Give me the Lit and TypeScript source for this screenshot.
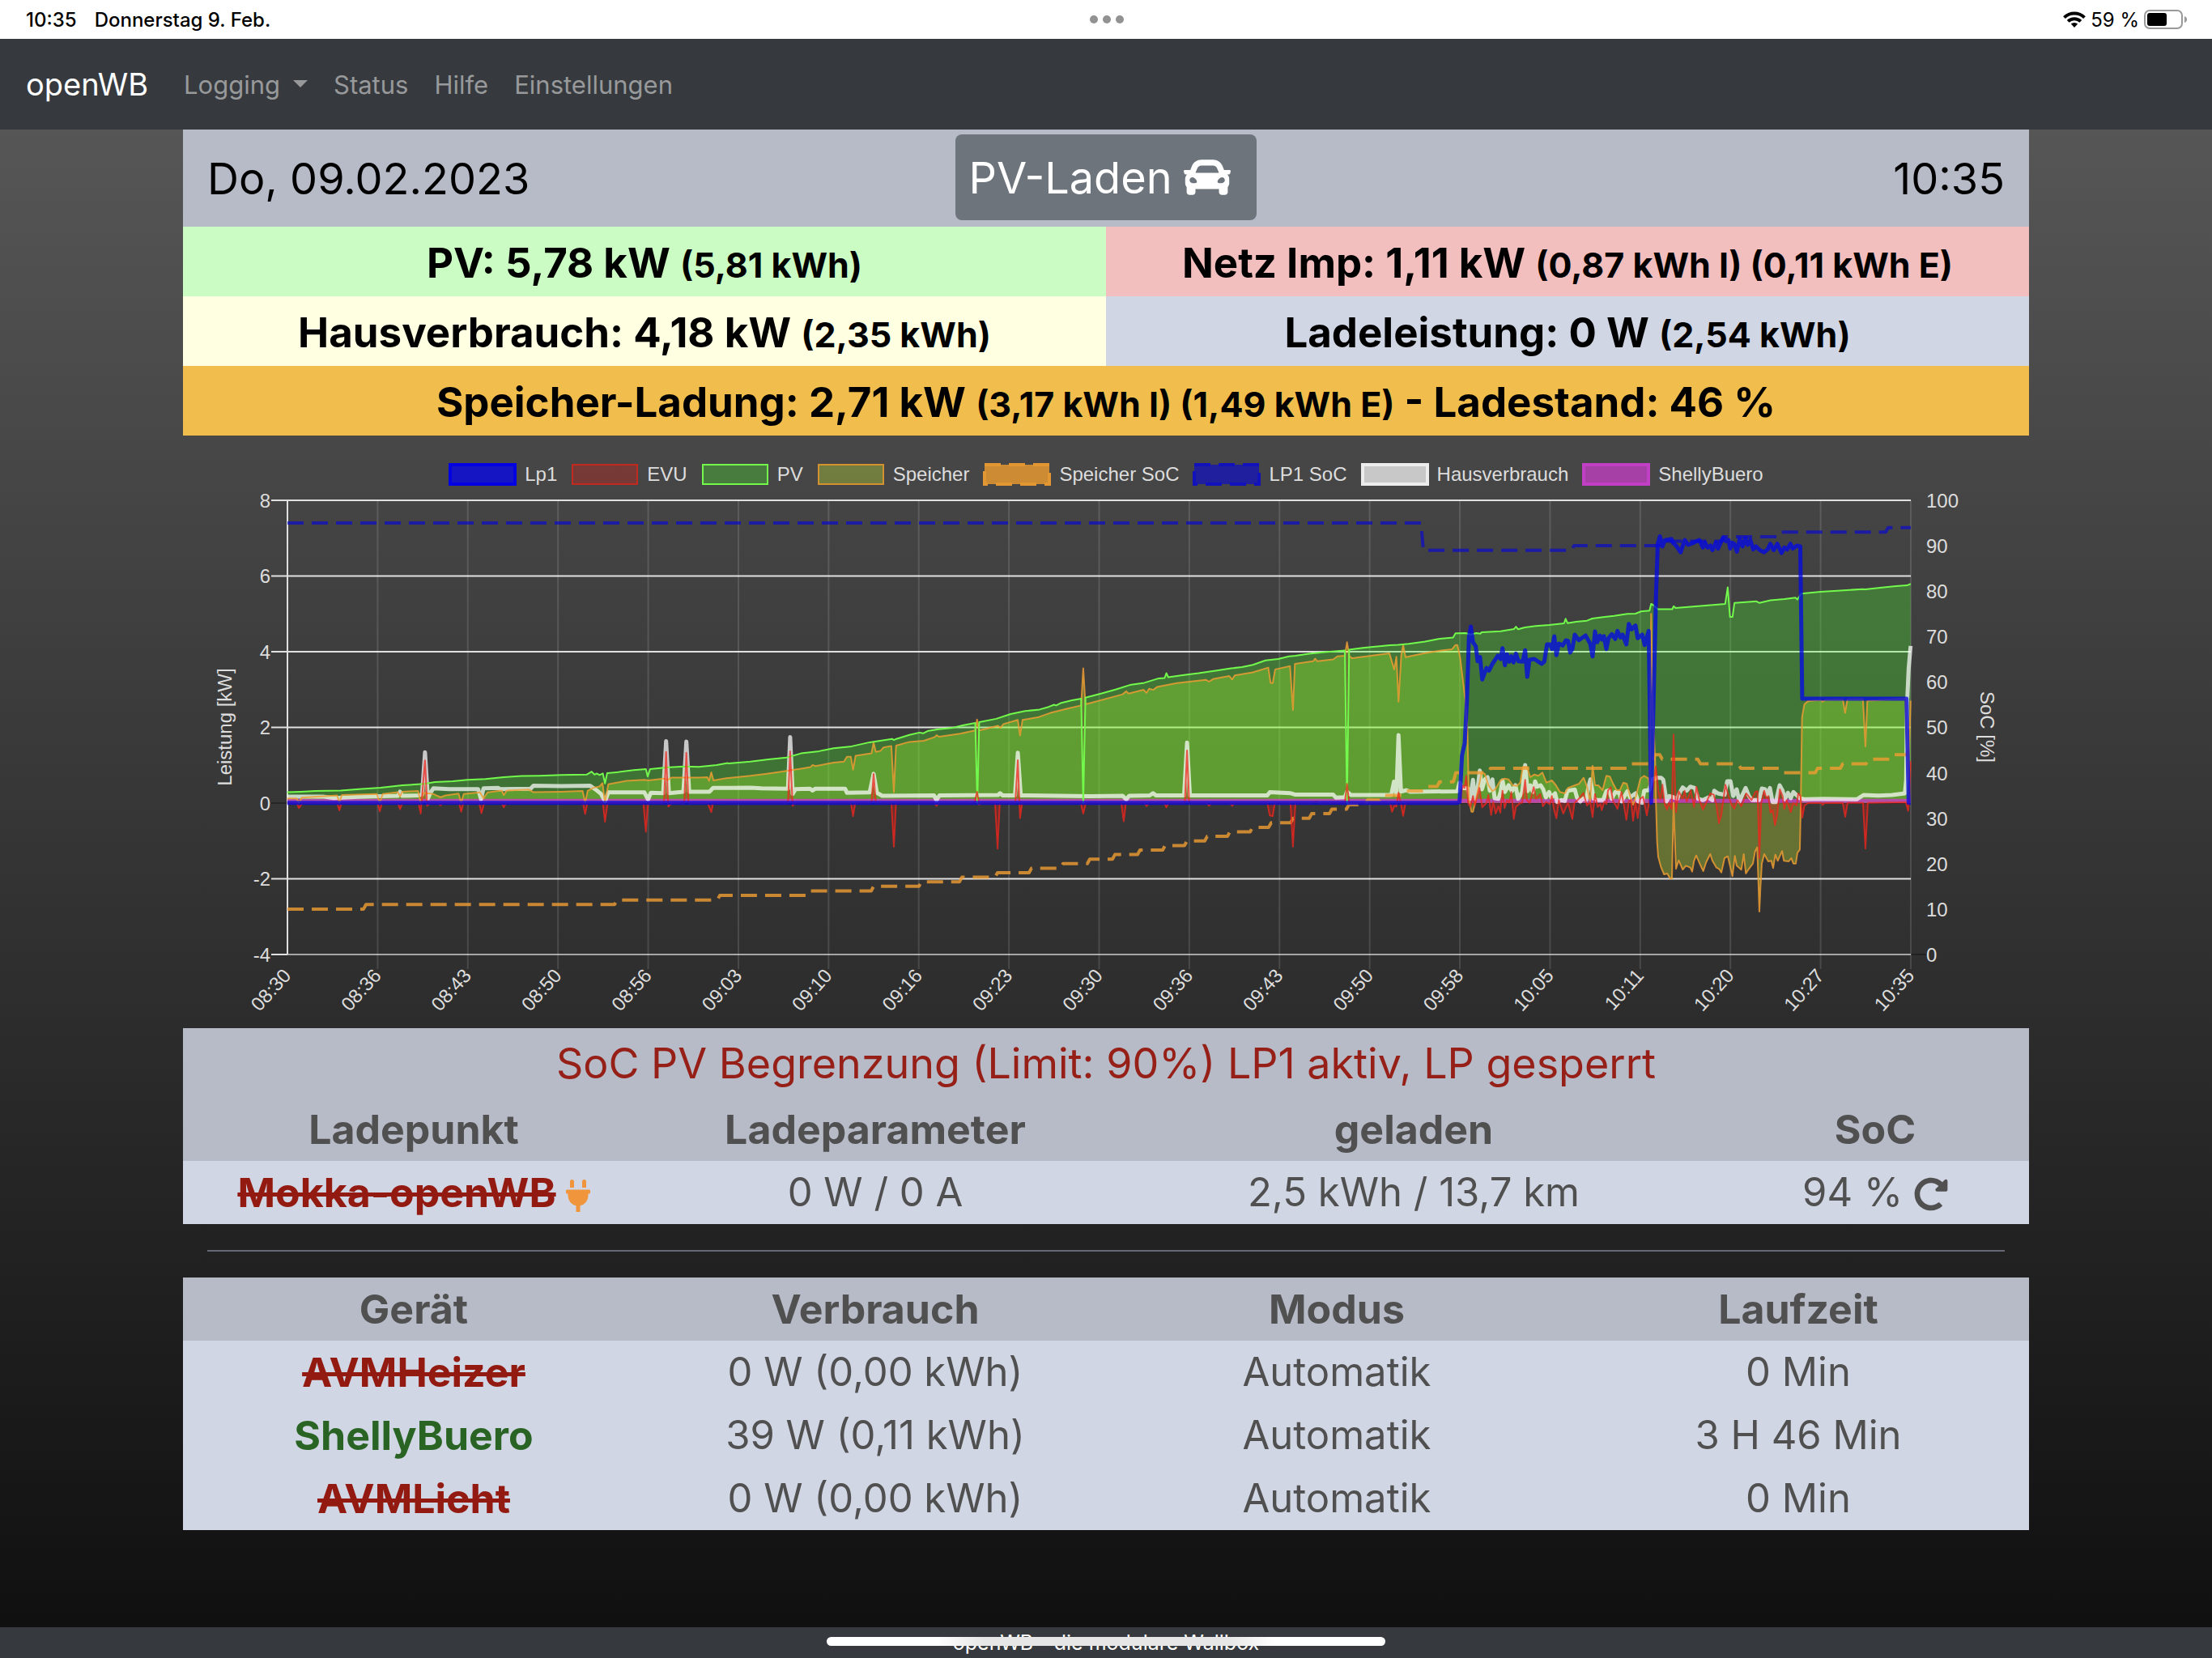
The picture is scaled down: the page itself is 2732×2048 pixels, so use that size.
import { LitElement, html, svg, css } from "lit";
import { customElement } from "lit/decorators.js";
import { classMap } from "lit/directives/class-map.js";

/* ---------- chart scales ---------- */

const LEFT = 355;
const RIGHT = 2360;
const TOP = 618;
const BOTTOM = 1179;
const TICKS = ["08:30", "08:36", "08:43", "08:50", "08:56", "09:03", "09:10", "09:16", "09:23", "09:30", "09:36", "09:43", "09:50", "09:58", "10:05", "10:11", "10:20", "10:27", "10:35"];

const yPower = (kw: number) => TOP + ((8 - kw) * (BOTTOM - TOP)) / 12;
const ySoc = (pct: number) => BOTTOM - (pct * (BOTTOM - TOP)) / 100;

type Raster = [number, number, number, number];
const R: Record<string, Raster> = {
  a: [220, 550, 2.24, 2.178],
  b: [900, 550, 2.24, 2.178],
  c: [1560, 550, 3, 2.178],
  d: [1980, 550, 2.904, 2.178],
  e: [1780, 740, 3, 3],
  f: [2020, 880, 3, 3],
};

const trace = (...blocks: [string, string][]): string =>
  blocks
    .map(([key, samples]) => {
      const [x0, y0, sx, sy] = R[key];
      return samples
        .trim()
        .split(/\s+/)
        .map((s) => {
          const [x, y] = s.split(",").map(Number);
          return `${(x0 + x / sx).toFixed(1)},${(y0 + y / sy).toFixed(1)}`;
        })
        .join(" ");
    })
    .join(" ");

const pv = trace(
  ["a", "302,933 340,932 380,930 450,929 500,925 560,921 620,915 680,911 710,906 760,904 800,900 850,898 900,893 950,890 1000,889 1060,887 1130,886 1144,878 1152,886 1158,883 1166,887 1175,883 1181,910 1187,882 1220,879 1260,874 1294,871 1299,891 1306,871 1350,867 1400,864 1440,865 1490,860 1520,855"],
  ["b", "0,856 60,851 110,845 160,840 200,829 250,823 290,815 340,810 390,799 452,790 457,793 464,790 500,779 528,773 538,775 550,769 580,764 620,760 650,753 682,747 688,962 693,745 740,736 780,723 820,715 860,711 885,704 900,698 906,700 920,693 950,686 975,682 981,962 987,679 1030,668 1070,657 1110,645 1150,639 1190,627 1206,626 1211,613 1216,624 1260,618 1300,613 1350,606 1390,600 1420,597 1450,591 1485,579 1520,575 1550,568"],
  ["c", "120,566 170,561 220,557 303,552 311,962 319,550 370,545 400,543 470,538 500,537 540,534 600,528 650,521 704,517"],
  ["e", "53,127 90,126 110,131 130,126 145,128 150,123 220,119 270,111 277,102 285,112 310,105 350,100 400,96 455,90 461,73 468,89 500,84 540,80 560,72 600,67 640,62 690,55 720,54 740,46 772,43 778,18"],
  ["d", "180,430 197,441 248,441 253,433 260,438 340,433 438,427 447,382 455,462 464,462 471,424 550,420 560,424 600,417 650,414 690,410 697,415 710,399 780,394 850,391 930,387 940,388 1000,383 1050,379 1090,377 1103,373"],
);

const battery = trace(
  ["a", "302,950 328,950 334,962 342,948 440,942 446,962 453,941 550,938 558,962 566,938 608,933 614,945 620,932 664,930 671,962 679,935 705,938 726,947 740,942 776,937 783,962 790,938 835,934 845,950 856,934 895,929 901,941 909,929 970,926 982,933 1060,932 1119,930 1126,962 1133,930 1150,921 1166,918 1174,909 1181,962 1190,912 1240,903 1290,900 1300,902 1345,897 1355,900 1365,894 1440,894 1464,893 1469,903 1475,880 1481,902 1520,895"],
  ["b", "0,895 60,889 110,883 160,876 200,870 226,866 232,860 240,863 290,854 319,851 327,838 338,838 344,873 351,835 395,829 401,800 407,825 420,822 428,813 450,809 457,933 463,808 500,798 540,795 570,785 575,780 582,784 640,776 682,767 687,738 693,767 745,755 752,760 760,750 800,739 806,781 813,739 855,732 890,720 940,708 975,700 981,600 987,697 1040,683 1090,670 1100,662 1106,668 1148,658 1156,666 1163,655 1175,658 1185,650 1240,640 1320,631 1329,636 1340,629 1385,621 1393,630 1400,619 1450,611 1493,598 1499,639 1505,640 1512,603 1553,594 1561,712"],
  ["c", "118,588 185,581 193,574 201,581 260,576 275,568 303,566 311,530 320,568 330,573 400,566 468,560 486,603 494,569 502,690 512,565 519,538 528,570 600,559 660,552 700,549"],
  ["e", "53,170 60,170 70,215 90,380 97,480 103,740 112,788 118,788 128,745 140,690 150,643 162,648 175,690 190,712 200,705 220,672 235,665 250,668 265,690 280,692 293,680 302,622 318,622 330,660 345,650 360,655 375,643 390,680 410,672 425,690 440,715 458,720 470,700 490,692 510,685 528,662 540,695 552,750 561,618 570,690 582,690 598,708 612,655 625,658 635,680 650,708 662,708 675,680 688,685 700,730 711,762 722,730 738,665 752,655 768,665 773,700 778,55 784,400 793,600"],
  ["f", "76,335 80,480 84,535 95,575 106,600 118,597 128,616 135,616 141,335 150,580 160,548 175,582 187,568 203,575 210,590 217,550 225,530 240,565 251,588 262,555 277,525 285,550 300,575 310,580 318,593 330,540 342,533 352,575 359,607 368,532 375,568 392,583 401,525 409,597 420,580 435,560 443,515 451,500 455,620 459,738 463,650 468,560 477,525 492,552 503,550 510,577 518,527 527,550 543,514 550,550 568,552 577,540 585,560 594,560 600,520 609,508 612,360 617,20"],
  ["d", "715,725 722,697 735,688 780,685 788,690 797,685 860,684 868,720 876,684 932,683 941,810 948,687 1000,685 1085,682 1094,900 1103,687"],
);

const grid = trace(
  ["a", "302,962 328,962 334,976 344,963 440,962 446,982 452,963 552,963 558,985 564,963 608,963 614,979 620,963 665,963 671,991 683,848 689,970 697,962 720,963 726,969 732,962 777,963 783,986 789,963 833,963 839,990 847,963 895,963 901,974 907,963 1120,963 1126,992 1132,963 1175,963 1181,1013 1188,963 1287,963 1294,1040 1300,963 1344,963 1350,825 1356,972 1366,963 1400,963 1406,827 1412,963 1465,963 1475,987 1480,963"],
  ["b", "0,962 164,962 170,823 177,970 185,962 338,962 344,998 350,962 395,962 401,884 407,962 450,962 457,1080 463,962 568,962 575,970 582,962 680,962 687,932 693,967 700,962 737,962 744,1085 750,962 793,962 800,847 806,1003 812,962 974,962 981,991 988,962 1086,962 1093,1012 1099,962 1150,962 1156,971 1163,962 1205,962 1211,974 1217,962 1262,962 1268,821 1274,962 1322,962 1329,970 1336,962 1387,962 1393,970 1400,962 1490,962 1497,996 1505,998 1511,962 1554,962 1561,1080 1568,962"],
  ["c", "185,962 194,958 203,962 303,962 311,911 319,962 470,962 478,986 487,970 494,972 502,935 511,965 519,997 528,962 713,962"],
  ["e", "68,750 80,690 86,700 93,655 100,755 108,770 118,730 125,765 142,700 152,772 168,755 175,725 185,800 193,752 202,795 212,768 219,792 227,710 235,775 244,745 252,755 260,715 269,815 277,770 293,755 300,755 311,670 318,745 328,755 343,697 352,740 367,722 377,768 388,752 403,760 410,730 418,780 427,812 436,745 452,795 470,755 486,815 494,755 510,740 527,718 540,765 552,752 561,808 570,722 580,770 590,760 595,782 605,750 612,760 618,710 628,697 637,750 647,765 653,778 668,715 678,770 686,818 695,750 703,745 711,822 720,755 728,812 737,740 748,732 762,802 770,755 785,700 795,620"],
  ["f", "85,290 92,322 100,268 108,340 117,360 124,335 134,358 141,82 150,370 160,292 175,320 182,290 190,330 205,288 217,350 226,275 238,330 250,360 262,335 277,300 290,305 299,340 309,410 318,380 333,268 345,310 357,345 366,357 378,325 392,348 410,300 430,325 443,295 452,292 459,540 466,335 477,290 485,318 492,310 500,372 508,362 517,418 525,380 535,285 545,310 551,358 560,325 575,370 585,335 597,345 603,300 611,310 618,390 626,345 640,336 690,336 694,343 700,336 768,335 777,387 786,335 843,335 852,505 861,335 1002,333 1010,365"],
  ["d", "1098,955 1103,850"],
);

const house = trace(
  ["a", "302,945 400,945 430,949 500,946 560,944 608,943 614,932 620,943 665,942 675,940 683,826 691,950 698,935 706,923 750,925 830,925 838,952 845,923 885,922 892,925 975,924 983,916 1060,917 1140,916 1155,926 1170,938 1181,958 1190,934 1290,934 1300,953 1308,935 1342,936 1350,796 1358,936 1398,932 1406,797 1414,932 1470,932 1480,922"],
  ["b", "0,922 60,921 90,923 164,924 170,785 177,938 185,925 225,924 232,929 240,924 322,924 327,935 390,934 401,884 410,935 425,943 568,942 575,955 583,942 745,941 751,936 758,942 792,942 800,827 808,942 1000,944 1090,943 1100,953 1108,943 1165,942 1174,936 1182,942 1260,942 1268,800 1276,942 1490,942 1497,933 1555,936"],
  ["c", "120,940 260,940 270,948 303,947 311,932 325,941 475,941 485,905 494,940 502,780 511,932 530,928 545,932 715,931"],
  ["e", "60,712 68,680 78,700 100,702 108,740 118,670 126,740 134,710 143,635 151,705 162,668 172,660 180,710 190,668 198,738 212,740 220,715 227,672 236,715 250,690 262,712 275,690 285,740 300,715 311,615 320,712 330,690 340,715 348,676 356,695 368,690 378,705 388,735 400,715 408,735 422,720 430,752 445,745 458,748 468,710 495,706 503,735 515,750 528,738 537,745 545,700 553,668 565,740 580,745 600,745 612,712 622,708 632,740 645,715 660,718 668,750 690,712 700,735 720,720 730,750 745,755 752,710 770,708 782,668"],
  ["f", "80,242 95,242 103,250 115,330 125,310 142,315 155,320 165,295 175,278 190,290 203,275 220,280 232,320 250,325 270,315 285,325 292,290 305,300 330,305 340,255 352,255 362,310 375,285 385,330 408,280 420,310 432,325 458,325 468,282 480,285 488,305 498,280 508,332 520,332 534,270 545,290 553,322 565,298 575,318 585,295 600,310 610,318 625,322 700,320 820,322 845,306 900,308 950,306 998,300"],
  ["d", "1087,900 1090,700 1096,600 1103,540"],
);

const lp1 = trace(
  ["a", "302,962"],
  ["c", "720,962"],
  ["e", "68,752 77,580 87,535 95,380 103,140 110,102 118,160 128,175 135,230 144,215 152,298 168,255 177,265 190,240 210,210 220,222 227,182 236,245 244,205 252,232 260,212 268,235 277,202 286,230 302,232 311,190 319,288 327,225 345,222 360,232 372,240 382,232 392,168 403,168 411,185 419,138 427,208 436,165 450,172 462,153 470,155 478,198 486,185 495,132 510,152 535,135 552,165 561,212 570,120 578,160 588,135 596,150 603,138 612,185 620,145 632,130 645,148 653,118 664,142 672,132 686,168 695,92 705,112 720,98 728,145 745,132 754,170 769,118 778,755"],
  ["d", "190,400 196,265 204,245 213,272 222,255 245,252 250,262 262,270 278,288 293,255 305,268 325,262 345,255 358,275 366,262 375,275 385,270 392,282 404,262 412,278 420,265 430,248 440,258 450,255 456,278 463,262 470,265 480,286 490,252 500,272 510,250 518,268 528,255 538,280 548,272 562,282 578,288 590,280 600,265 612,282 625,265 640,290 650,275 660,280 672,265 680,278 695,270 707,272 714,682 1088,682 1096,962 1103,962"],
);

/* State of charge is logged only when it changes: [x of change, new percent]. */
const stairs = (start: number, changes: [number, number][]): string => {
  let level = start;
  const points = [`${LEFT},${ySoc(level).toFixed(1)}`];
  for (const [x, next] of changes) {
    points.push(`${x - 1},${ySoc(level).toFixed(1)}`, `${x + 2},${ySoc(next).toFixed(1)}`);
    level = next;
  }
  points.push(`${RIGHT},${ySoc(level).toFixed(1)}`);
  return points.join(" ");
};

const lp1Soc = stairs(95, [[1756, 89], [1942, 90], [2052, 91], [2127, 92], [2198, 93], [2330, 94]]);
const batterySoc = stairs(10, [
  [450, 11], [760, 12], [887, 13], [998, 14], [1077, 15], [1136, 16], [1186, 17], [1230, 18], [1272, 19], [1311, 20],
  [1344, 21], [1375, 22], [1406, 23], [1437, 24], [1464, 25], [1489, 26], [1517, 27], [1545, 28], [1568, 29], [1595, 30],
  [1618, 31], [1643, 32], [1664, 33], [1687, 34], [1705, 35], [1733, 36], [1760, 37], [1776, 38], [1796, 40], [1839, 41],
  [2012, 42], [2042, 44], [2051, 43], [2098, 42], [2148, 41], [2198, 40], [2243, 41], [2274, 42], [2306, 43], [2337, 44], [2356, 46],
]);

const closed = (points: string) => `${LEFT},${yPower(0)} ${points} ${RIGHT},${yPower(0)}`;

/* ---------- chart ---------- */

const LEGEND = [
  { label: "Lp1", kind: "lp1", stroke: 4 },
  { label: "EVU", kind: "evu", stroke: 2 },
  { label: "PV", kind: "pv", stroke: 2 },
  { label: "Speicher", kind: "battery", stroke: 2 },
  { label: "Speicher SoC", kind: "battery-soc", stroke: 4 },
  { label: "LP1 SoC", kind: "lp1-soc", stroke: 4 },
  { label: "Hausverbrauch", kind: "house", stroke: 4 },
  { label: "ShellyBuero", kind: "shelly", stroke: 4 },
];

@customElement("power-chart")
export class PowerChart extends LitElement {
  static styles = css`
    :host { display: block; font-family: "Liberation Sans", Arial, sans-serif; font-size: 24px; color: #ddd; }
    .legend { display: flex; justify-content: center; gap: 17px; margin: 0; padding: 34px 0 6px; list-style: none; line-height: 28px; }
    .legend li { display: flex; gap: 10px; }
    .swatch { width: 84px; height: 28px; }
    .plot { display: block; width: 100%; height: auto; }
    .plot text { fill: #ddd; font-size: 24px; }
    .end { text-anchor: end; }
    .mid { text-anchor: middle; }
    .rule { stroke: #e0e0e0; stroke-width: 2; }
    .rule.low { stroke: #a6a6a6; }
    .rule.zero { stroke: rgba(0, 0, 0, 0.3); }
    .column { stroke: rgba(255, 255, 255, 0.13); stroke-width: 2; }
    .line { fill: none; stroke-linejoin: round; stroke-linecap: butt; }
    .line.pv { stroke: #72f94c; stroke-width: 2; }
    .line.evu { stroke: rgba(238, 38, 30, 0.76); stroke-width: 2; }
    .line.battery { stroke: rgba(240, 157, 50, 0.82); stroke-width: 2; }
    .line.battery-soc { stroke: rgba(240, 157, 50, 0.8); stroke-width: 4; stroke-dasharray: 20 10; }
    .line.lp1-soc { stroke: rgba(10, 10, 205, 0.7); stroke-width: 4; stroke-dasharray: 20 10; }
    .line.lp1 { stroke: rgba(5, 10, 225, 0.78); stroke-width: 5; }
    .line.house { stroke: rgba(255, 255, 255, 0.72); stroke-width: 5; }
    .line.shelly { stroke: rgba(200, 60, 200, 0.8); stroke-width: 5; }
    .area.pv, .box.pv { fill: rgba(75, 251, 48, 0.3); }
    .area.evu, .box.evu { fill: rgba(231, 31, 21, 0.3); }
    .area.battery, .box.battery { fill: rgba(214, 255, 48, 0.3); }
    .box.lp1 { fill: #1515c4; stroke: #0202e2; }
    .box.evu { stroke: #c22a20; }
    .box.pv { stroke: #72f94c; }
    .box.battery { stroke: #d3912f; }
    .box.battery-soc { fill: #cd8b33; stroke: #e39733; stroke-dasharray: 20 10; }
    .box.lp1-soc { fill: #20209f; stroke: #1212bd; stroke-dasharray: 20 10; }
    .box.house { fill: #c8c8c8; stroke: #ececec; }
    .box.shelly { fill: #a63fa6; stroke: #c03fc4; }
  `;

  private column(i: number) {
    return LEFT + (i * (RIGHT - LEFT)) / (TICKS.length - 1);
  }

  render() {
    const shelly = `${LEFT},${yPower(0.06)} ${RIGHT},${yPower(0.06)}`;
    return html`
      <ul class="legend">
        ${LEGEND.map(
          (s) => html`<li>
            <svg class="swatch" viewBox="0 0 84 28" aria-hidden="true">
              <rect class="box ${s.kind}" x="2" y="2" width="80" height="24" stroke-width=${s.stroke}></rect>
            </svg>
            <span>${s.label}</span>
          </li>`,
        )}
      </ul>
      <svg class="plot" viewBox="226 606 2280 664" role="img" aria-label="Leistung und SoC">
        ${[8, 6, 4, 2, 0, -2, -4].map((v) => {
          const y = yPower(v);
          return svg`
            <line class=${v === 0 ? "rule zero" : "rule"} x1="335" x2=${LEFT} y1=${y} y2=${y}></line>
            <line class=${classMap({ rule: true, low: v === -4, zero: v === 0 })} x1=${LEFT} x2=${RIGHT} y1=${y} y2=${y}></line>
            <text class="end" x="334" y=${y + 9}>${v}</text>`;
        })}
        <line class="rule zero" x1=${RIGHT} x2="2379" y1=${BOTTOM} y2=${BOTTOM}></line>
        ${TICKS.map((t, i) => {
          const x = this.column(i);
          return svg`
            <line class=${i === 0 ? "rule" : "column"} x1=${x} x2=${x} y1=${TOP} y2=${i === 0 ? BOTTOM : BOTTOM + 18}></line>
            <text class="end" transform="translate(${x - 1} ${BOTTOM + 21}) rotate(-48)" y="9">${t}</text>`;
        })}
        ${[0, 10, 20, 30, 40, 50, 60, 70, 80, 90, 100].map((v) => svg`<text x="2379" y=${ySoc(v) + 9}>${v}</text>`)}
        <text class="mid" transform="translate(286 898) rotate(-90)">Leistung [kW]</text>
        <text class="mid" transform="translate(2446 898) rotate(90)">SoC [%]</text>

        <polygon class="area battery" points=${closed(battery)}></polygon>
        <polygon class="area pv" points=${closed(pv)}></polygon>
        <polygon class="area evu" points=${closed(grid)}></polygon>
        <polyline class="line shelly" points=${shelly}></polyline>
        <polyline class="line house" points=${house}></polyline>
        <polyline class="line lp1-soc" points=${lp1Soc}></polyline>
        <polyline class="line battery-soc" points=${batterySoc}></polyline>
        <polyline class="line battery" points=${battery}></polyline>
        <polyline class="line pv" points=${pv}></polyline>
        <polyline class="line evu" points=${grid}></polyline>
        <polyline class="line lp1" points=${lp1}></polyline>
      </svg>
    `;
  }
}

/* ---------- icons ---------- */

const carIcon = html`<svg class="car" viewBox="0 0 512 512" aria-hidden="true"><path fill="currentColor" d="M499.99 176h-59.87l-16.64-41.6C406.38 91.63 365.57 64 319.5 64h-127c-46.06 0-86.88 27.63-103.99 70.4L71.87 176H12.01C4.2 176-1.53 183.34.37 190.91l6 24C7.7 220.25 12.5 224 18.01 224h20.07C24.65 235.73 16 252.78 16 272v48c0 16.12 6.16 30.67 16 41.93V416c0 17.67 14.33 32 32 32h32c17.67 0 32-14.33 32-32v-32h256v32c0 17.67 14.33 32 32 32h32c17.67 0 32-14.33 32-32v-54.07c9.84-11.25 16-25.8 16-41.93v-48c0-19.22-8.65-36.27-22.07-48H494c5.51 0 10.31-3.75 11.64-9.09l6-24c1.89-7.57-3.84-14.91-11.65-14.91zm-352.06-17.83c7.29-18.22 24.94-30.17 44.57-30.17h127c19.63 0 37.28 11.95 44.57 30.17L384 208H128l19.93-49.83zM96 319.8c-19.2 0-32-12.76-32-31.9S76.8 256 96 256s48 28.71 48 47.85-28.8 15.95-48 15.95zm320 0c-19.2 0-48 3.19-48-15.95S396.8 256 416 256s32 12.76 32 31.9-12.8 31.9-32 31.9z"/></svg>`;

const plugIcon = html`<svg class="plug" viewBox="0 0 384 512" aria-label="angesteckt"><path fill="currentColor" d="M320 32a32 32 0 0 0-64 0v96h64zm48 128H16a16 16 0 0 0-16 16v32a16 16 0 0 0 16 16h16v32a160.07 160.07 0 0 0 128 156.8V512h64v-99.2A160.07 160.07 0 0 0 352 256v-32h16a16 16 0 0 0 16-16v-32a16 16 0 0 0-16-16zM128 32a32 32 0 0 0-64 0v96h64z"/></svg>`;

const redoIcon = html`<svg class="redo" viewBox="0 0 512 512" aria-hidden="true"><path fill="currentColor" d="M256.455 8c66.269.119 126.437 26.233 170.859 68.685l35.715-35.715C478.149 25.851 504 36.559 504 57.941V192c0 13.255-10.745 24-24 24H345.941c-21.382 0-32.09-25.851-16.971-40.971l41.75-41.75c-30.864-28.899-70.801-44.907-113.23-45.273-92.398-.798-170.283 73.977-169.484 169.442C88.764 348.009 162.184 424 256 424c41.127 0 79.997-14.678 110.629-41.556 4.743-4.161 11.906-3.908 16.368.553l39.662 39.662c4.872 4.872 4.631 12.815-.482 17.433C378.202 479.813 319.926 504 256 504 119.034 504 8.001 392.967 8 256.002 7.993 119.193 119.646 7.755 256.455 8z"/></svg>`;

const wifiIcon = html`<svg class="wifi" viewBox="0 0 28 20" aria-label="WLAN"><g fill="none" stroke="#000" stroke-width="4"><path d="M1.5 7.6a18 18 0 0 1 25 0"/><path d="M6.2 12.4a11.2 11.2 0 0 1 15.6 0"/></g><path d="M14 20l-4.2-4.4a6 6 0 0 1 8.4 0z"/></svg>`;

const batteryIcon = html`<svg class="cell" viewBox="0 0 54 24" aria-label="Akku"><rect x="1" y="1" width="46" height="22" rx="6" fill="none" stroke="#999" stroke-width="2"/><rect x="4" y="4" width="24" height="16" rx="3"/><path d="M50 8q3 1 3 4t-3 4z" fill="#999"/></svg>`;

/* ---------- page ---------- */

const DEVICES = [
  { name: "AVMHeizer", on: false, usage: "0 W (0,00 kWh)", mode: "Automatik", time: "0 Min" },
  { name: "ShellyBuero", on: true, usage: "39 W (0,11 kWh)", mode: "Automatik", time: "3 H 46 Min" },
  { name: "AVMLicht", on: false, usage: "0 W (0,00 kWh)", mode: "Automatik", time: "0 Min" },
];

@customElement("app-root")
export class AppRoot extends LitElement {
  static styles = css`
    :host { display: block; font-family: Inter, "Liberation Sans", sans-serif; color: #000; }
    * { box-sizing: border-box; }
    .page { display: flex; flex-direction: column; min-height: 100vh; position: relative; }
    .system { display: grid; grid-template-columns: 1fr auto 1fr; align-items: center; height: 48px; padding: 0 30px 0 32px; background: #fff; font-size: 24px; font-weight: 500; }
    .clock { display: flex; gap: 22px; }
    .dots { display: flex; gap: 6px; }
    .dots i { width: 10px; height: 10px; border-radius: 50%; background: #929292; }
    .indicators { display: flex; align-items: center; justify-content: flex-end; gap: 6px; font-weight: 400; }
    .wifi { width: 28px; height: 20px; }
    .cell { width: 54px; height: 24px; }
    .navbar { display: flex; align-items: center; height: 112px; padding: 0 32px; background: #363a3e; }
    .navbar a { color: #98999b; font-size: 31px; text-decoration: none; margin-right: 32px; }
    .navbar .brand { color: #fff; font-size: 38px; margin-right: 44px; }
    .caret { display: inline-block; margin-left: 16px; border: 9px solid transparent; border-top-color: currentColor; border-bottom: 0; vertical-align: 8px; }
    .body { flex: 1; background: linear-gradient(#565656, #101010); }
    .container { width: 83.455%; margin: 0 auto; }
    .headline { display: grid; grid-template-columns: 1fr auto 1fr; align-items: center; height: 120px; padding: 0 30px; background: #b7bac7; font-size: 54px; }
    .mode { display: flex; align-items: center; gap: 14px; height: 106px; padding: 0 32px 0 16px; border: 0; border-radius: 8px; background: #6d747b; color: #fff; font: inherit; margin-bottom: 2px; }
    .car { width: 58px; height: 58px; }
    .time { text-align: right; }
    .facts { display: grid; grid-template-columns: 1fr 1fr; grid-auto-rows: 86px; text-align: center; font-size: 51px; font-weight: 700; line-height: 90px; }
    .facts small { font-size: 43px; line-height: 1; }
    .fact.pv { background: #cafcc3; }
    .fact.import { background: #f3bfbe; }
    .fact.house { background: #ffffe2; }
    .fact.load { background: #d1d6e4; }
    .fact.battery { grid-column: 1 / -1; background: #f1be4d; }
    .notice { padding: 2px 0 0; background: #b7bac7; color: #962018; font-size: 52px; line-height: 84px; text-align: center; }
    table { width: 100%; border-collapse: collapse; table-layout: fixed; font-size: 49px; line-height: 78px; color: #505050; text-align: center; }
    th, td { padding: 0; height: 78px; }
    th { font-size: 50px; font-weight: 700; }
    thead { background: #b7bac7; }
    tbody { background: #d1d6e4; }
    .quarter { width: 25%; }
    .third { width: 33.333%; }
    .sixth { width: 16.667%; }
    .on { color: #296424; }
    .off { color: #931a10; text-decoration: line-through; }
    .plug { height: 40px; width: 30px; margin-left: 12px; color: #f0953c; vertical-align: -6px; }
    .reload { border: 0; padding: 0; background: none; color: inherit; line-height: 0; }
    .redo { height: 42px; width: 42px; vertical-align: -6px; }
    hr { margin: 32px 30px; border: 0; height: 2px; background: #666973; }
    .foot { height: 38px; overflow: hidden; background: #363a3e; color: #fff; text-align: center; font-size: 25px; line-height: 38px; }
    .home { position: absolute; left: 50%; bottom: 15px; width: 690px; height: 11px; margin-left: -345px; border-radius: 6px; background: linear-gradient(90deg, #fff 20%, #e6e6e6 28%, #e6e6e6 72%, #fff 80%); }
  `;

  render() {
    return html`
      <div class="page">
        <div class="system">
          <div class="clock"><span>10:35</span><span>Donnerstag 9. Feb.</span></div>
          <div class="dots"><i></i><i></i><i></i></div>
          <div class="indicators">${wifiIcon}<span>59 %</span>${batteryIcon}</div>
        </div>
        <nav class="navbar">
          <a class="brand" href="#">openWB</a>
          <a href="#logging">Logging<span class="caret"></span></a>
          <a href="#status">Status</a>
          <a href="#hilfe">Hilfe</a>
          <a href="#einstellungen">Einstellungen</a>
        </nav>
        <main class="body">
          <div class="container">
            <header class="headline">
              <span>Do, 09.02.2023</span>
              <button class="mode" type="button">PV-Laden${carIcon}</button>
              <span class="time">10:35</span>
            </header>
            <section class="facts">
              <div class="fact pv">PV: 5,78 kW <small>(5,81 kWh)</small></div>
              <div class="fact import">Netz Imp: 1,11 kW <small>(0,87 kWh I) (0,11 kWh E)</small></div>
              <div class="fact house">Hausverbrauch: 4,18 kW <small>(2,35 kWh)</small></div>
              <div class="fact load">Ladeleistung: 0 W <small>(2,54 kWh)</small></div>
              <div class="fact battery">Speicher-Ladung: 2,71 kW <small>(3,17 kWh I) (1,49 kWh E)</small> - Ladestand: 46 %</div>
            </section>
            <power-chart></power-chart>
            <div class="notice">SoC PV Begrenzung (Limit: 90%) LP1 aktiv, LP gesperrt</div>
            <table>
              <colgroup><col class="quarter" /><col class="quarter" /><col class="third" /><col class="sixth" /></colgroup>
              <thead>
                <tr><th>Ladepunkt</th><th>Ladeparameter</th><th>geladen</th><th>SoC</th></tr>
              </thead>
              <tbody>
                <tr>
                  <th scope="row"><span class="off">Mokka-openWB</span>${plugIcon}</th>
                  <td>0 W / 0 A</td>
                  <td>2,5 kWh / 13,7 km</td>
                  <td>94 % <button class="reload" type="button" aria-label="SoC aktualisieren">${redoIcon}</button></td>
                </tr>
              </tbody>
            </table>
            <hr />
            <table>
              <thead>
                <tr><th>Gerät</th><th>Verbrauch</th><th>Modus</th><th>Laufzeit</th></tr>
              </thead>
              <tbody>
                ${DEVICES.map(
                  (d) => html`<tr>
                    <th scope="row"><span class=${d.on ? "on" : "off"}>${d.name}</span></th>
                    <td>${d.usage}</td>
                    <td>${d.mode}</td>
                    <td>${d.time}</td>
                  </tr>`,
                )}
              </tbody>
            </table>
          </div>
        </main>
        <footer class="foot">openWB - die modulare Wallbox</footer>
        <div class="home"></div>
      </div>
    `;
  }
}
